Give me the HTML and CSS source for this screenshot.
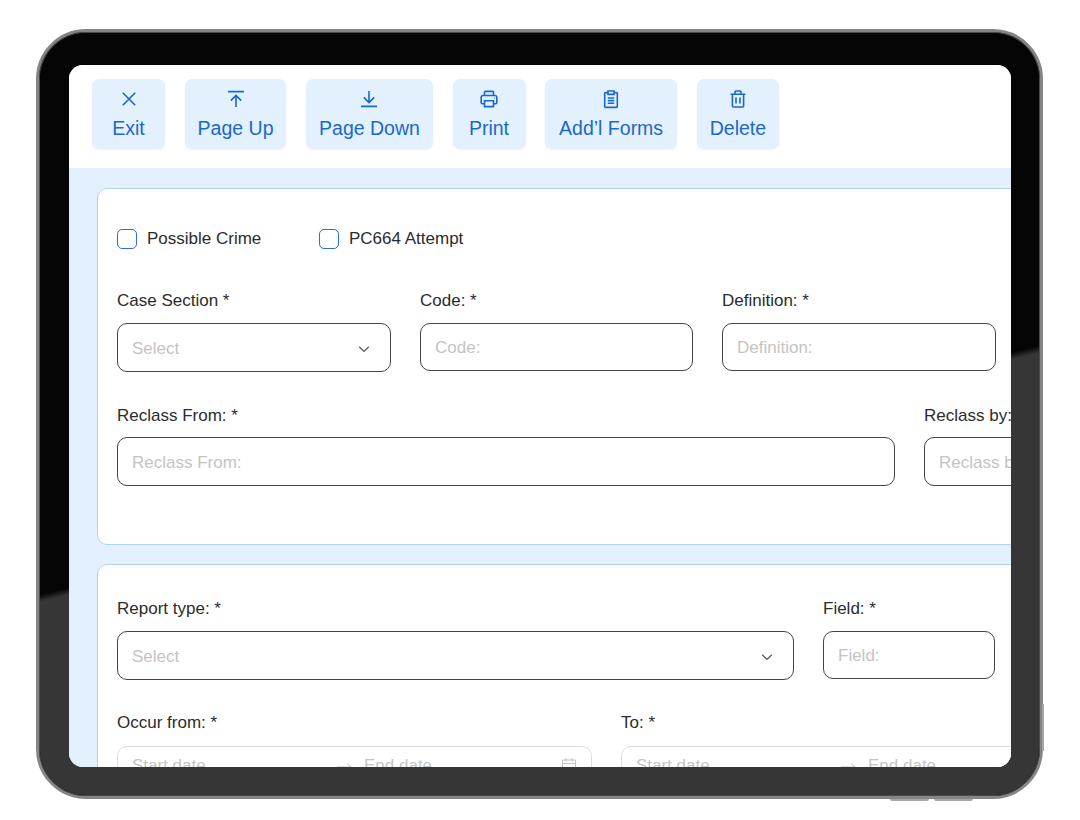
FILE: index.html
```html
<!DOCTYPE html>
<html lang="en">
<head>
<meta charset="utf-8">
<title>Case form</title>
<link rel="stylesheet" href="styles.css">
</head>
<body>
<div class="device">
  <span class="side-key"></span>
  <span class="bottom-key bottom-key-a"></span>
  <span class="bottom-key bottom-key-b"></span>
  <main class="screen">
    <header class="toolbar">
      <button class="tool"><svg class="ico" viewBox="0 0 20 20"><path d="M3.8 3.8 16.2 16.2M16.2 3.8 3.8 16.2"/></svg><span>Exit</span></button>
      <button class="tool"><svg class="ico" viewBox="0 0 20 20"><path d="M2 2.6H18M10 18V6.5M4.8 11.6 10 6.4l5.2 5.2"/></svg><span>Page Up</span></button>
      <button class="tool"><svg class="ico" viewBox="0 0 20 20"><path d="M2 17.4H18M10 2V13.5M4.8 8.4 10 13.6l5.2-5.2"/></svg><span>Page Down</span></button>
      <button class="tool"><svg class="ico" viewBox="0 0 20 20"><path d="M5.5 6.5V3.2a.8.8 0 0 1 .8-.8h7.4a.8.8 0 0 1 .8.8v3.3M5.5 14.8H3.4a1.2 1.2 0 0 1-1.2-1.2V8.3a1.8 1.8 0 0 1 1.8-1.8h12a1.8 1.8 0 0 1 1.8 1.8v5.3a1.2 1.2 0 0 1-1.2 1.2h-2.1M5.5 11.8h9v5.8h-9zM15 9.3h.6"/></svg><span>Print</span></button>
      <button class="tool tool-forms"><svg class="ico" viewBox="0 0 20 20"><path d="M6.8 3.6H4.6a.9.9 0 0 0-.9.9v13a.9.9 0 0 0 .9.9h10.8a.9.9 0 0 0 .9-.9v-13a.9.9 0 0 0-.9-.9h-2.2M7 2h6v3.4H7zM6.8 9h6.4M6.8 11.6h6.4M6.8 14.2h6.4"/></svg><span>Add’l Forms</span></button>
      <button class="tool"><svg class="ico" viewBox="0 0 20 20"><path d="M2.6 5.2H17.4M7 5V3a1 1 0 0 1 1-1h4a1 1 0 0 1 1 1v2M4.4 5.2V17a1 1 0 0 0 1 1h9.2a1 1 0 0 0 1-1V5.2M8 8.6v6M12 8.6v6"/></svg><span>Delete</span></button>
    </header>
    <div class="content">
      <section class="card card-one">
        <div class="checks">
          <label class="check check-a"><span class="box"></span>Possible Crime</label>
          <label class="check"><span class="box"></span>PC664 Attempt</label>
        </div>
        <div class="row row-three">
          <div class="field"><label>Case Section *</label>
            <div class="input select"><span>Select</span><svg class="chev" viewBox="0 0 12 12"><path d="M1.2 3.8 6 8.4l4.8-4.6"/></svg></div></div>
          <div class="field"><label>Code: *</label><div class="input text"><span>Code:</span></div></div>
          <div class="field"><label>Definition: *</label><div class="input text"><span>Definition:</span></div></div>
        </div>
        <div class="row row-reclass">
          <div class="field"><label>Reclass From: *</label><div class="input text"><span>Reclass From:</span></div></div>
          <div class="field"><label>Reclass by: *</label><div class="input text"><span>Reclass by:</span></div></div>
        </div>
      </section>
      <section class="card card-two">
        <div class="row row-report">
          <div class="field"><label>Report type: *</label>
            <div class="input select"><span>Select</span><svg class="chev" viewBox="0 0 12 12"><path d="M1.2 3.8 6 8.4l4.8-4.6"/></svg></div></div>
          <div class="field"><label>Field: *</label><div class="input text"><span>Field:</span></div></div>
        </div>
        <div class="row row-dates">
          <div class="field"><label>Occur from: *</label>
            <div class="input date">
              <span class="date-start">Start date</span>
              <svg class="arrow" viewBox="0 0 16 10"><path d="M1 5H15M11 1.5 15 5l-4 3.5"/></svg>
              <span class="date-end">End date</span>
              <svg class="cal" viewBox="0 0 16 16"><path d="M1.5 3h13v12h-13zM1.5 6.5h13M5 1v3.5M11 1v3.5"/></svg>
            </div></div>
          <div class="field"><label>To: *</label>
            <div class="input date">
              <span class="date-start">Start date</span>
              <svg class="arrow" viewBox="0 0 16 10"><path d="M1 5H15M11 1.5 15 5l-4 3.5"/></svg>
              <span class="date-end">End date</span>
              <svg class="cal" viewBox="0 0 16 16"><path d="M1.5 3h13v12h-13zM1.5 6.5h13M5 1v3.5M11 1v3.5"/></svg>
            </div></div>
        </div>
      </section>
    </div>
  </main>
</div>
</body>
</html>
```
FILE: styles.css
```css
* { box-sizing: border-box; }
html, body { margin: 0; height: 820px; overflow: hidden; background: #fff; }
body { padding: 29px 0 0 36px; font-family: "Liberation Sans", Arial, sans-serif; }

.device {
  position: relative;
  width: 1007px;
  height: 770px;
  padding: 33px 29px 29px 30px;
  border: 3px solid #858585;
  border-radius: 50px;
  background: #050505;
  box-shadow: inset 0 0 0 1px #4a4a4a;
}
.device::before {
  content: "";
  position: absolute;
  inset: 1px;
  border-radius: 46px;
  background: linear-gradient(346deg, #363636 429px, #050505 436px);
}
.side-key {
  position: absolute;
  right: -4px;
  top: 672px;
  width: 2px;
  height: 47px;
  background: #a5a5a5;
}
.bottom-key {
  position: absolute;
  bottom: -5px;
  height: 2px;
  width: 39px;
  background: #a8a8a8;
  border-radius: 0 0 3px 3px;
}
.bottom-key-a { left: 851px; }
.bottom-key-b { left: 895px; }

.screen {
  position: relative;
  display: flex;
  flex-direction: column;
  width: 942px;
  height: 702px;
  border-radius: 14px;
  overflow: hidden;
  background: #fff;
}

.toolbar {
  display: flex;
  flex: none;
  gap: 19.6px;
  height: 103px;
  padding: 14px 0 0 23px;
  background: #fff;
}
.tool {
  display: flex;
  flex-direction: column;
  align-items: center;
  min-width: 73px;
  height: 70px;
  padding: 10px 13px 0;
  border: 0;
  border-radius: 7px;
  background: #e3f0fe;
  box-shadow: 0 1px 2px rgba(30, 100, 200, 0.08);
  color: #1b68cc;
  font: 19.5px/24px "Liberation Sans", Arial, sans-serif;
}
.tool-forms { padding: 10px 14px 0; }
.ico {
  width: 20px;
  height: 20px;
  margin-bottom: 7px;
  fill: none;
  stroke: currentColor;
  stroke-width: 1.6;
}

.content {
  flex: 1;
  min-height: 0;
  padding: 20px 0 0 28px;
  background: #e3f0fe;
}
.card {
  width: 1040px;
  padding: 0 19px;
  border: 1px solid #b3d2fa;
  border-radius: 10px;
  background: #fff;
}
.card-one { height: 357px; margin-bottom: 19px; padding-top: 40px; }
.card-two { height: 300px; padding-top: 33px; }

.checks { display: flex; height: 20px; margin-bottom: 41px; }
.check { display: flex; align-items: center; gap: 10px; font-size: 17px; color: #2c2c2c; }
.check-a { width: 202px; }
.box {
  width: 20px;
  height: 20px;
  border: 1px solid #2a72cf;
  border-radius: 5px;
  background: #fff;
}

.row { display: grid; column-gap: 29px; }
.row-three { grid-template-columns: 274px 273px 274px; margin-bottom: 33px; }
.row-reclass { grid-template-columns: 778px 300px; }
.row-report { grid-template-columns: 677px 172px; margin-bottom: 32px; }
.row-dates { grid-template-columns: 475px 475px; }

.field label {
  display: block;
  height: 22px;
  margin-bottom: 12px;
  font-size: 17px;
  line-height: 22px;
  color: #2c2c2c;
}
.row-three .field label { margin-bottom: 11px; }
.row-reclass .field label { margin-bottom: 10px; }
.row-report .field label { margin-bottom: 11px; }
.input {
  display: flex;
  align-items: center;
  height: 48px;
  padding: 2px 14px 0;
  border: 1px solid #444;
  border-radius: 10px;
  background: #fff;
  font-size: 17px;
  color: #c4c4c4;
}
.row-reclass .input { height: 49px; }
.select { height: 49px; padding-right: 20px; justify-content: space-between; }
.chev { width: 12px; height: 12px; fill: none; stroke: #555; stroke-width: 1.2; }

.date { align-items: flex-start; height: 60px; padding-top: 9px; border-color: #dedede; }
.date-start { width: 204px; }
.date-end { margin-left: 12px; }
.arrow { width: 16px; height: 10px; margin-top: 6px; fill: none; stroke: #bbb; stroke-width: 1; }
.cal { width: 16px; height: 16px; margin-top: 1px; margin-left: auto; fill: none; stroke: #c4c4c4; stroke-width: 1; }
```
